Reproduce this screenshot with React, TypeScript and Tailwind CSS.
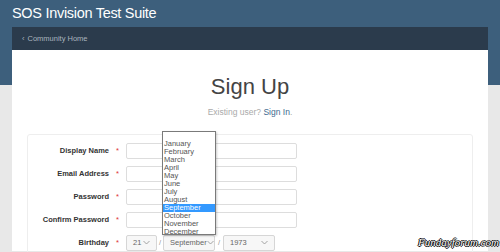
const months = [
  "January",
  "February",
  "March",
  "April",
  "May",
  "June",
  "July",
  "August",
  "September",
  "October",
  "November",
  "December",
];

const fields = ["Display Name", "Email Address", "Password", "Confirm Password"];

function Chevron() {
  return (
    <svg width="7" height="5" viewBox="0 0 7 5" className="shrink-0">
      <path d="M0.5 1 L3.5 4 L6.5 1" fill="none" stroke="#999" strokeWidth="0.9" />
    </svg>
  );
}

function SelectBox({ value, width }: { value: string; width: string }) {
  return (
    <div
      className={`${width} h-[16px] flex items-center justify-between px-[6px] border border-[#d6d6d6] rounded-[2px] bg-[#f7f7f7] text-[#666]`}
    >
      <span>{value}</span>
      <Chevron />
    </div>
  );
}

export default function App() {
  return (
    <div
      className="w-[500px] h-[252px] overflow-hidden relative bg-[linear-gradient(#3d5f7c_85px,#e8e8e8_85px)] px-3"
      style={{ fontFamily: '"Liberation Sans", Arial, sans-serif' }}
    >
      <div className="h-[28px] flex items-center text-white text-[14.5px] tracking-[-0.3px] leading-none -mt-[1px]">
        SOS Invision Test Suite
      </div>

      <div className="h-[23px] bg-[#2b3b4c] flex items-center pl-[10px] text-[7.5px] text-[#aab4bf]">
        <span className="mr-[3px]">‹</span>Community Home
      </div>

      <div className="bg-white h-[201px] px-[15px]">
        <h1 className="text-center text-[22px] text-[#444] leading-none pt-[26px]">Sign Up</h1>
        <p className="text-center text-[8.5px] text-[#aaa] mt-[8px]">
          Existing user? <span className="text-[#3d6a8f]">Sign In</span>.
        </p>

        <div className="mt-[15px] border border-[#eee] rounded-[3px] h-[200px] pt-[8px] flex flex-col gap-[7px] text-[7.5px]">
          {fields.map((f) => (
            <div key={f} className="flex items-center h-[16px]">
              <div className="w-[81px] text-right font-bold text-[#333]">{f}</div>
              <div className="w-[17px] text-center text-[#d33]">*</div>
              <div className="w-[171px] h-[16px] border border-[#ddd] rounded-[2px] bg-white" />
            </div>
          ))}
          <div className="flex items-center h-[16px]">
            <div className="w-[81px] text-right font-bold text-[#333]">Birthday</div>
            <div className="w-[17px] text-center text-[#d33]">*</div>
            <SelectBox value="21" width="w-[31px]" />
            <span className="w-[6px] text-center text-[#999]">/</span>
            <SelectBox value="September" width="w-[52px]" />
            <span className="w-[8px] text-center text-[#999]">/</span>
            <SelectBox value="1973" width="w-[52px]" />
          </div>
        </div>
      </div>

      <div className="absolute left-[162px] top-[131px] w-[54px] h-[104px] bg-white border border-[#7a7a7a] text-[7.5px] text-[#555] shadow-[1px_1px_2px_rgba(0,0,0,0.2)]">
        <div className="h-[8px]" />
        {months.map((m) => (
          <div
            key={m}
            className={`h-[8px] leading-[8px] pl-[1px] ${m === "September" ? "bg-[#3399ff] text-white" : ""}`}
          >
            {m}
          </div>
        ))}
      </div>

      <div
        className="absolute right-[1px] bottom-[2px] text-[11px] italic text-white"
        style={{
          fontFamily: '"Liberation Serif", serif',
          textShadow: "1px 0 0 #000, -1px 0 0 #000, 0 1px 0 #000, 0 -1px 0 #000",
        }}
      >
        Fundayforum.com
      </div>
    </div>
  );
}
